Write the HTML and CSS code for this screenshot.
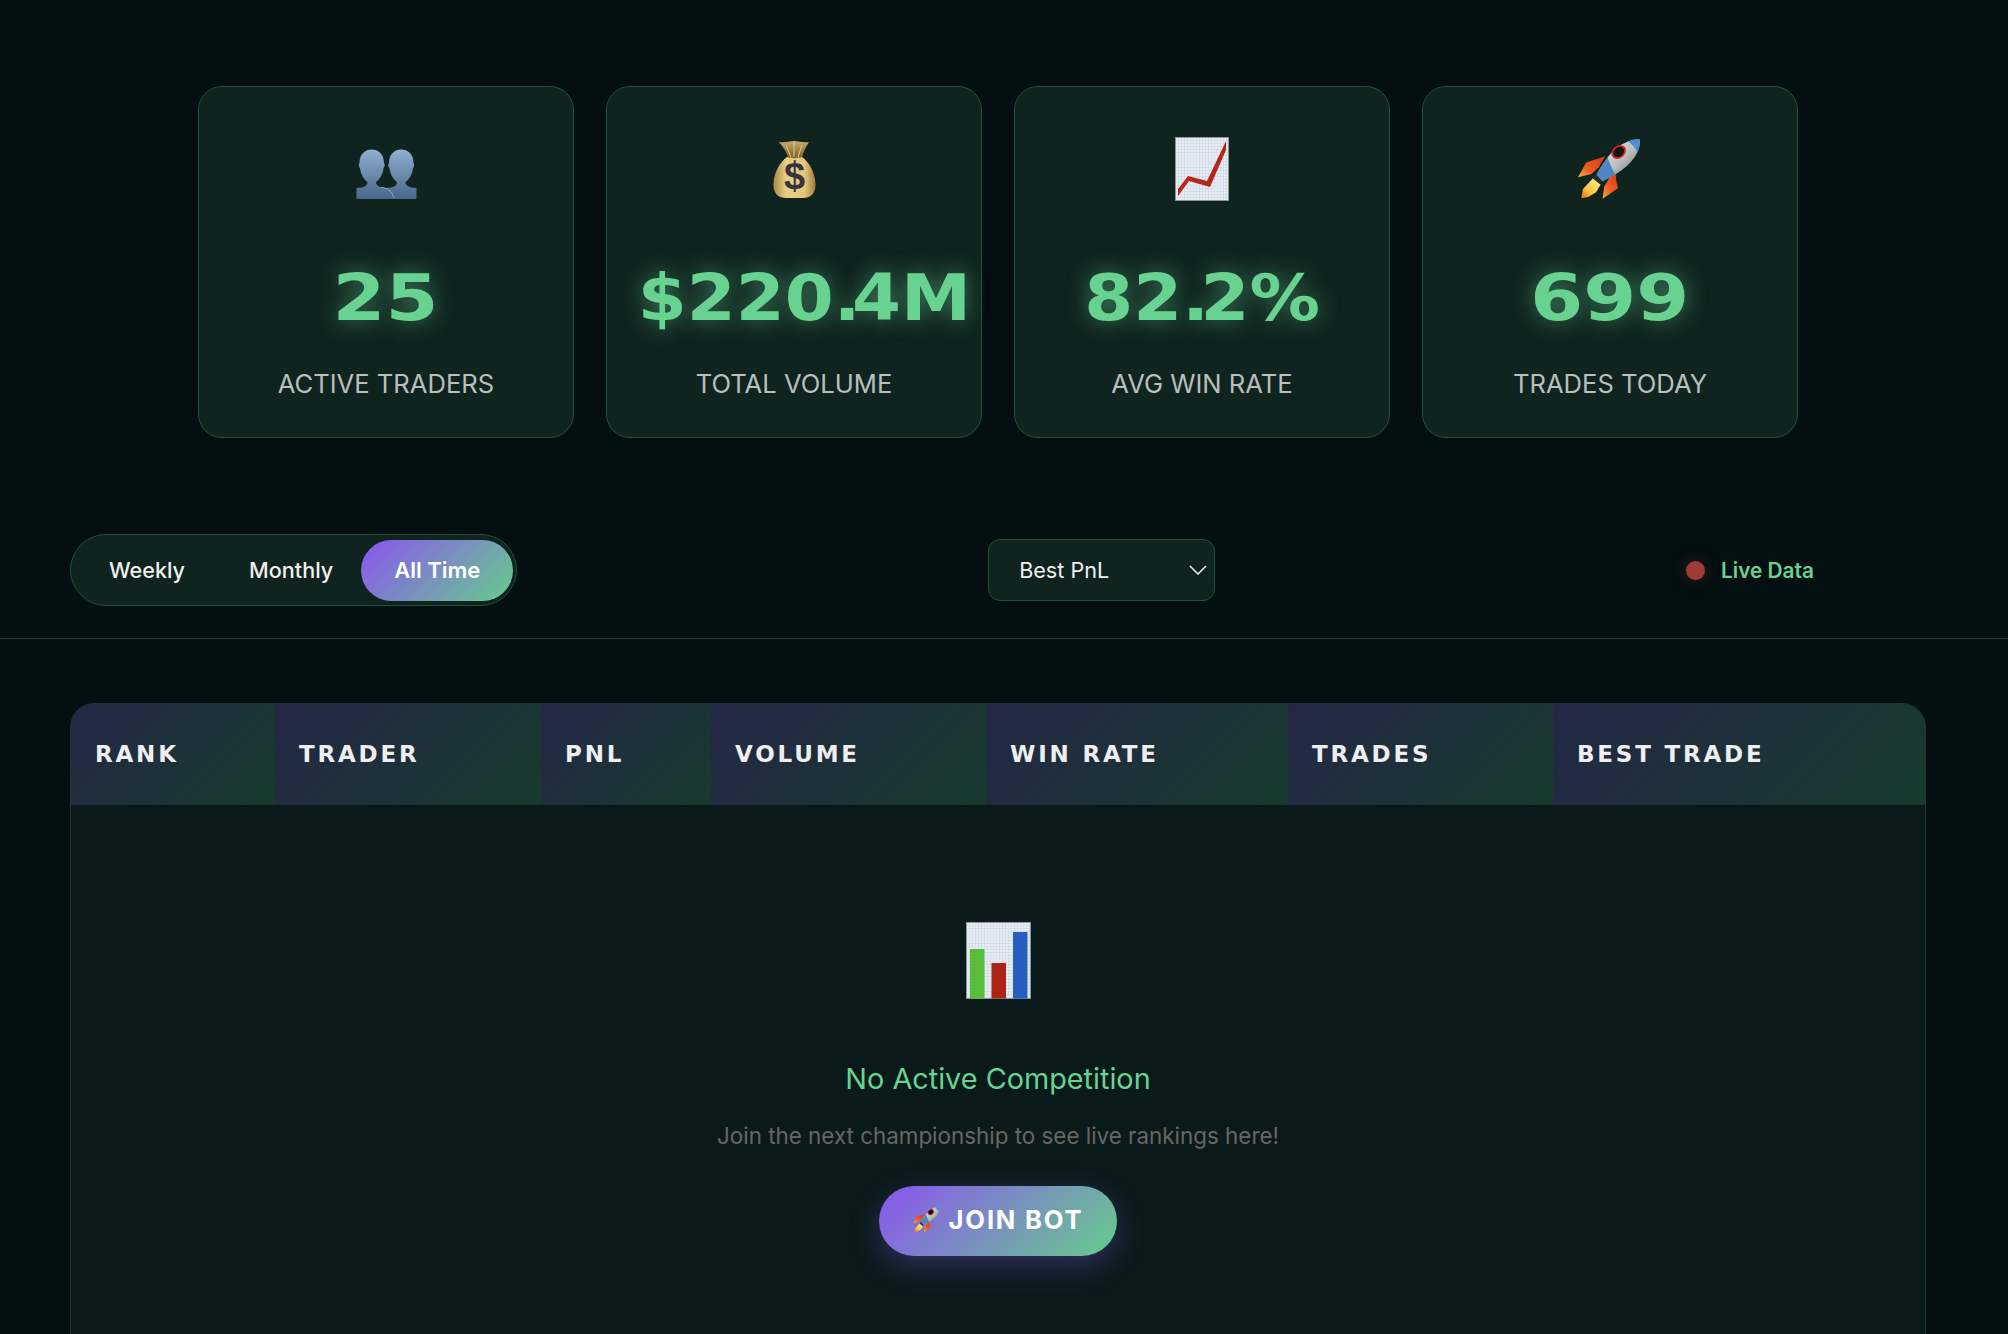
FILE: index.html
```html
<!DOCTYPE html>
<html lang="en">
<head>
    <meta charset="UTF-8">
    <meta name="viewport" content="width=device-width, initial-scale=1.0">
    <title>Leaderboard</title>
    <link rel="stylesheet" href="styles.css">
</head>
<body>
    <svg class="defs" width="0" height="0" aria-hidden="true">
        <defs>
            <linearGradient id="bust" x1="0" y1="0" x2="0" y2="1">
                <stop offset="0" stop-color="#8fb0d0"/>
                <stop offset="1" stop-color="#48668a"/>
            </linearGradient>
            <linearGradient id="bag" x1="0" y1="0" x2="1" y2="0">
                <stop offset="0" stop-color="#a98a45"/>
                <stop offset="0.3" stop-color="#e9cf86"/>
                <stop offset="0.75" stop-color="#e3c67a"/>
                <stop offset="1" stop-color="#9c7c3b"/>
            </linearGradient>
            <linearGradient id="neck" x1="0" y1="0" x2="0" y2="1">
                <stop offset="0" stop-color="#c9ab68"/>
                <stop offset="1" stop-color="#7d5f28"/>
            </linearGradient>
            <pattern id="gridlines" width="3" height="3" patternUnits="userSpaceOnUse">
                <rect width="3" height="3" fill="#e9edf1"/>
                <path d="M0 0H3M0 0V3" stroke="#b9d0e6" stroke-width="0.8"/>
            </pattern>
            <linearGradient id="hull" x1="0" y1="0" x2="1" y2="1">
                <stop offset="0" stop-color="#f0f0f0"/>
                <stop offset="0.55" stop-color="#b9bcbd"/>
                <stop offset="1" stop-color="#55595c"/>
            </linearGradient>
            <linearGradient id="fin" x1="1" y1="0" x2="0" y2="1">
                <stop offset="0" stop-color="#d9321a"/>
                <stop offset="0.6" stop-color="#ee5a1f"/>
                <stop offset="1" stop-color="#f6b23a"/>
            </linearGradient>
            <linearGradient id="flame" x1="1" y1="0" x2="0" y2="1">
                <stop offset="0" stop-color="#fff0a0"/>
                <stop offset="0.6" stop-color="#fbc73f"/>
                <stop offset="1" stop-color="#e8701f"/>
            </linearGradient>
            <symbol id="rocket" viewBox="55 40 195 190">
                <path d="M55 160 80 115 138 96 118 130 96 150Z" fill="url(#fin)"/>
                <path d="M130 226 135 188 168 132 172 172 177 194Z" fill="url(#fin)"/>
                <path d="M65 224 70 196 100 164 124 182 110 206 86 220Z" fill="url(#flame)"/>
                <path d="M100 160 116 146 136 168 120 180Z" fill="#2a2d30"/>
                <path d="M243 45C210 42 170 65 145 100 130 120 118 140 112 152L130 172C150 162 180 147 205 125 232 100 246 70 243 45Z" fill="url(#hull)"/>
                <path d="M243 45C232 43 220 46 209 51 220 60 231 72 236 84 242 71 245 58 243 45Z" fill="#4f8ed0"/>
                <path d="M145 100C130 120 118 140 112 152L130 172C142 166 156 159 168 151 158 134 150 114 145 100Z" fill="#4c86c4"/>
                <ellipse cx="179" cy="83" rx="24" ry="19" transform="rotate(-40 179 83)" fill="#cf2a1d"/>
                <ellipse cx="179" cy="83" rx="18" ry="14" transform="rotate(-40 179 83)" fill="#111"/>
            </symbol>
        </defs>
    </svg>

    <section class="stats">
        <div class="stat-card">
            <div class="stat-icon">
                <svg class="icon-busts" width="61" height="50" viewBox="0 0 61 50">
                    <path d="M30 50V39C37.500 38.500 41 37 41 33 36.500 30 34 24 33.500 19 32 18 32 15 33 14 33 5 38.500.5 45.200.5 52 .5 57.500 5 57.500 14 58.500 15 58.500 18 57 19 56.500 24 54 30 49.500 33 49.500 37 53 38.500 60.500 39V50Z" fill="url(#bust)"/>
                    <path d="M.5 50V39C8 38.500 11.500 37 11.500 33 7 30 4.500 24 4 19 2.500 18 2.500 15 3.500 14 3.500 5 9 .5 15.700.5 22.500.5 28 5 28 14 29 15 29 18 27.500 19 27 24 24.500 30 20 33 20 37 23.500 38.500 31 39 35 40.500 37 44 38 50Z" fill="url(#bust)"/>
                    <path d="M25 38.500C31 38.500 36 42 38 49" fill="none" stroke="#a9c2da" stroke-width="0.7"/>
                </svg>
            </div>
            <div class="stat-value"><span class="num">25</span></div>
            <div class="stat-label">Active Traders</div>
        </div>
        <div class="stat-card">
            <div class="stat-icon">
                <svg width="43" height="58" viewBox="0 0 43 58">
                    <path d="M6 2C12 3 16 1 21 1 26 1 30 3 36 2 33 7 30 12 29 18H15C14 12 10 7 6 2Z" fill="url(#neck)"/>
                    <path d="M13 5 18 17M21 2V17M29 5 25 17" fill="none" stroke="#e2c98a" stroke-width="1"/>
                    <path d="M14 17C18 18.500 25 18.500 29 17 36 22 42 32 42.500 44 43 54 37 58 30 58H13C6 58 0 54 .5 44 1 32 7 22 14 17Z" fill="url(#bag)"/>
                    <text class="bag-sign" x="21.500" y="49">$</text>
                </svg>
            </div>
            <div class="stat-value stat-value-wide"><span class="num">$220<span class="dot">.</span>4M</span></div>
            <div class="stat-label">Total Volume</div>
        </div>
        <div class="stat-card">
            <div class="stat-icon">
                <svg width="54" height="64" viewBox="0 0 54 64">
                    <rect x="0.500" y="0.500" width="53" height="63" fill="url(#gridlines)" stroke="#8d979b"/>
                    <path d="M3 52 13 39 32 44 51 4V13L35 50 14 44 3 59Z" fill="#b5271a"/>
                </svg>
            </div>
            <div class="stat-value stat-value-pct"><span class="num">82<span class="dot">.</span>2%</span></div>
            <div class="stat-label">Avg Win Rate</div>
        </div>
        <div class="stat-card">
            <div class="stat-icon">
                <svg class="rocket-lg"><use href="#rocket"/></svg>
            </div>
            <div class="stat-value"><span class="num">699</span></div>
            <div class="stat-label">Trades Today</div>
        </div>
    </section>

    <section class="controls">
        <div class="period-tabs">
            <button class="tab">Weekly</button>
            <button class="tab">Monthly</button>
            <button class="tab active">All Time</button>
        </div>
        <select class="sort-select">
            <option>Best PnL</option>
            <option>Best Win Rate</option>
            <option>Most Volume</option>
        </select>
        <div class="live">
            <span class="live-dot"></span>
            <span class="live-text">Live Data</span>
        </div>
    </section>

    <section class="board">
        <table class="board-table">
            <thead>
                <tr>
                    <th class="col-rank">Rank</th>
                    <th class="col-trader">Trader</th>
                    <th class="col-pnl">PnL</th>
                    <th class="col-volume">Volume</th>
                    <th class="col-winrate">Win Rate</th>
                    <th class="col-trades">Trades</th>
                    <th class="col-best">Best Trade</th>
                </tr>
            </thead>
            <tbody>
                <tr>
                    <td class="empty" colspan="7">
                        <svg class="empty-icon" width="65" height="77" viewBox="0 0 65 77">
                            <rect x="0.500" y="0.500" width="64" height="76" fill="url(#gridlines)" stroke="#8d979b"/>
                            <rect x="4" y="27" width="14.500" height="49.500" fill="#57bd3a"/>
                            <rect x="25.500" y="41" width="14.500" height="35.500" fill="#ad2417"/>
                            <rect x="47" y="10" width="14.500" height="66.500" fill="#2560c0"/>
                        </svg>
                        <h3 class="empty-title">No Active Competition</h3>
                        <p class="empty-text">Join the next championship to see live rankings here!</p>
                        <button class="join-btn">
                            <svg class="rocket-sm"><use href="#rocket"/></svg>
                            <span>JOIN BOT</span>
                        </button>
                    </td>
                </tr>
            </tbody>
        </table>
    </section>
</body>
</html>
```

FILE: styles.css
```css
* {
    box-sizing: border-box;
}
html, body {
    height: 100vh;
    overflow: hidden;
}
body {
    margin: 0;
    background: #030f11;
    color: #f0f0f0;
    font-family: 'Inter', sans-serif;
}
.defs {
    position: absolute;
}

/* stat cards */
.stats {
    display: grid;
    grid-template-columns: repeat(4, 376px);
    gap: 32px;
    justify-content: center;
    padding: 86px 12px 64px 0;
}
.stat-card {
    height: 352px;
    padding: 50px 32px 0;
    background: #10241f;
    border: 1px solid #22503a;
    border-radius: 24px;
    text-align: center;
}
.stat-icon {
    height: 64px;
    display: flex;
    justify-content: center;
    align-items: center;
}
.icon-busts {
    margin-top: 10px;
}
.bag-sign {
    font-family: 'Liberation Sans', sans-serif;
    font-size: 38px;
    font-weight: bold;
    fill: #38323f;
    text-anchor: middle;
}
.rocket-lg {
    width: 64px;
    height: 64px;
}
.stat-value {
    margin-top: 58px;
    font-family: 'DejaVu Sans', sans-serif;
    font-size: 64px;
    font-weight: bold;
    line-height: 78px;
    white-space: nowrap;
    color: #68d391;
    text-shadow: 0 0 20px rgba(104, 211, 145, 0.5);
}
.num {
    display: inline-block;
    transform: scaleX(1.19);
}
.dot {
    letter-spacing: -0.12em;
}
.stat-value-wide {
    padding-left: 14px;
}
.stat-value-wide .num,
.stat-value-pct .num {
    transform: scaleX(1.1);
}
.stat-label {
    margin-top: 31px;
    font-size: 25.6px;
    line-height: 32px;
    text-transform: uppercase;
    color: #b8bfbc;
}

/* controls */
.controls {
    display: flex;
    justify-content: space-between;
    align-items: center;
    padding: 32px 82px 32px 70px;
    border-bottom: 1px solid #1a3a2c;
}
.period-tabs {
    display: flex;
    align-items: center;
    height: 72px;
    padding: 0 3px 0 6px;
    background: #10241f;
    border: 1px solid #22503a;
    border-radius: 36px;
}
.tab {
    height: 61px;
    padding: 0 32px;
    background: none;
    border: none;
    border-radius: 31px;
    color: #f0f0f0;
    font-family: inherit;
    font-size: 21.6px;
    font-weight: 500;
}
.tab.active {
    margin-left: -4px;
    padding: 0 33px;
    background: linear-gradient(135deg, #8b54f0, #66cc8c);
    color: #fff;
    font-size: 22px;
    font-weight: 600;
}
.sort-select {
    width: 227px;
    height: 62px;
    padding: 0 30px;
    appearance: none;
    background: #10241f url("data:image/svg+xml,%3Csvg xmlns='http://www.w3.org/2000/svg' width='18' height='10' viewBox='0 0 18 10'%3E%3Cpath d='M1 1l8 8 8-8' fill='none' stroke='%23f0f0f0' stroke-width='1.500'/%3E%3C/svg%3E") no-repeat right 7px center;
    border: 1px solid #22503a;
    border-radius: 12px;
    color: #f0f0f0;
    font-family: inherit;
    font-size: 21.6px;
}
.live {
    display: flex;
    align-items: center;
    gap: 16px;
    width: 240px;
    color: #68d391;
    font-size: 20.8px;
    font-weight: 600;
}
.live-dot {
    width: 19px;
    height: 19px;
    border-radius: 50%;
    background: #a03c36;
    box-shadow: 0 0 16px rgba(160, 60, 54, 0.35);
}

/* leaderboard */
.board {
    padding: 64px 82px 0 70px;
}
.board-table {
    width: 100%;
    table-layout: fixed;
    border-collapse: separate;
    border-spacing: 0;
    background: #0a1a1a;
    border: 1px solid #1a3a2c;
    border-radius: 24px;
    overflow: hidden;
}
.board-table th {
    height: 101px;
    padding: 0 24px 2px;
    text-align: left;
    background: linear-gradient(135deg, rgba(139, 92, 246, 0.2), rgba(72, 187, 120, 0.2));
    font-family: 'DejaVu Sans', sans-serif;
    font-size: 23px;
    font-weight: bold;
    letter-spacing: 2.8px;
    text-transform: uppercase;
    color: #eeeeee;
}
.col-rank { width: 204px; }
.col-trader { width: 266px; }
.col-pnl { width: 170px; }
.col-volume { width: 275px; }
.col-winrate { width: 302px; }
.col-trades { width: 265px; }
.empty {
    height: 640px;
    padding: 117px 0 0;
    text-align: center;
    vertical-align: top;
}
.empty-icon {
    display: block;
    margin: 0 auto;
}
.empty-title {
    margin: 62px 0 0;
    font-size: 28.8px;
    font-weight: 400;
    line-height: 36px;
    color: #68d391;
}
.empty-text {
    margin: 25px 0 0;
    font-size: 22.4px;
    line-height: 28px;
    color: #666666;
}
.join-btn {
    display: inline-flex;
    align-items: center;
    justify-content: center;
    gap: 8px;
    width: 238px;
    height: 70px;
    margin-top: 36px;
    padding: 0 0 3px;
    background: linear-gradient(135deg, #8b54f0, #66cc8c);
    border: none;
    border-radius: 35px;
    box-shadow: 0 10px 30px rgba(139, 92, 246, 0.3);
    color: #fff;
    font-family: inherit;
    font-size: 25.6px;
    font-weight: 700;
    letter-spacing: 1.8px;
}
.rocket-sm {
    width: 28px;
    height: 27px;
}
```
